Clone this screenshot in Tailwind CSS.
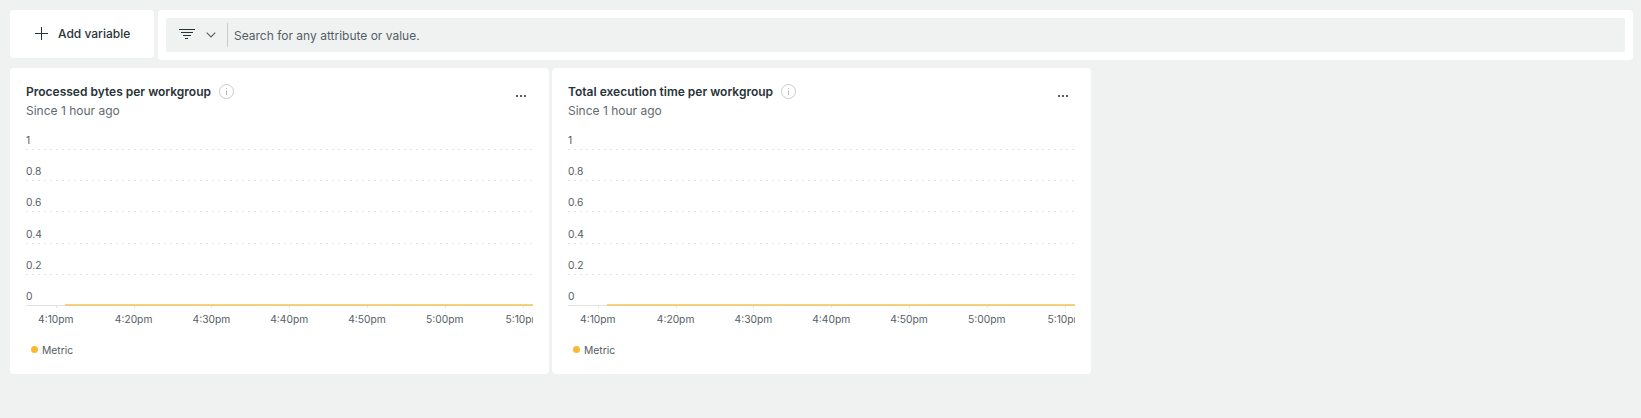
<!DOCTYPE html>
<html lang="en">
<head>
<meta charset="utf-8">
<title>Workgroup dashboard</title>
<script src="https://cdn.jsdelivr.net/npm/@tailwindcss/browser@4"></script>
</head>
<body class="h-[418px] overflow-hidden bg-[#f0f2f2] pt-2.5 pr-2 pl-2.5 font-['Inter',sans-serif] text-[#293338]">
<svg class="hidden">
  <defs>
    <g id="chart">
      <g stroke="#e3e4e4" stroke-dasharray="2 4">
        <path d="M0 21.5H507M0 52.5H507M0 83.5H507M0 115.5H507M0 146.5H507"/>
        <path d="M30.5 178v7M108.5 178v7M185.5 178v7M263.5 178v7M341.5 178v7M419.5 178v7M497.5 178v7"/>
      </g>
      <path d="M0 177.5H507" stroke="#e3e4e4"/>
      <path d="M39 177H507" stroke="#f8d37c" stroke-width="2"/>
      <path d="M39 177.5H507" stroke="#efcb7c"/>
      <g font-size="10.25" fill="#535e65">
        <text x="0" y="16">1</text>
        <text x="0" y="47">0.8</text>
        <text x="0" y="78">0.6</text>
        <text x="0" y="110">0.4</text>
        <text x="0" y="141">0.2</text>
        <text x="0" y="172">0</text>
        <g text-anchor="middle">
          <text x="29.8" y="195">4:10pm</text>
          <text x="107.6" y="195">4:20pm</text>
          <text x="185.4" y="195">4:30pm</text>
          <text x="263.2" y="195">4:40pm</text>
          <text x="341" y="195">4:50pm</text>
          <text x="418.8" y="195">5:00pm</text>
          <text x="497" y="195">5:10pm</text>
        </g>
      </g>
    </g>
    <g id="info" fill="none">
      <circle cx="7.5" cy="7.5" r="7" stroke="#c6cccd"/>
      <path d="M7.5 6.5V11M7.5 4v1" stroke="#b5bcbe"/>
    </g>
  </defs>
</svg>

<header class="flex items-start gap-1">
  <button class="flex h-12 w-36 items-start rounded-[4px] bg-white pt-[17px] pl-[25px]">
    <svg class="h-[13px] w-[13px]" viewBox="0 0 13 13"><path d="M6.5 0v13M0 6.5h13" stroke="#293338" fill="none"/></svg>
    <span class="ml-2.5 text-[12px] leading-[14px] font-medium whitespace-nowrap">Add variable</span>
  </button>
  <div class="h-[50px] flex-1 rounded-[4px] bg-white p-2">
    <div class="flex h-[34px] items-center rounded-[2px] bg-[#f0f2f2] pl-[13px]">
      <svg class="-mt-0.5 h-2.5 w-4" viewBox="0 0 16 10"><path d="M0 .5h16M2 3.5h12M4 6.5h8M6 9.5h3" stroke="#293338" fill="none"/></svg>
      <svg class="ml-[10.5px] h-[6px] w-[10px]" viewBox="0 0 10 6"><path d="M.7.7 5 5 9.3.7" stroke="#535e65" stroke-width="1.1" fill="none"/></svg>
      <div class="ml-[11.5px] h-6 w-px bg-[#c6cccd]"></div>
      <span class="ml-1.5 pt-0.5 text-[12px] leading-4 whitespace-nowrap text-[#535e65]">Search for any attribute or value.</span>
    </div>
  </div>
</header>

<main class="mt-2 flex gap-[3px]">
  <section class="h-[306px] w-[539px] rounded-[4px] bg-white pt-4 pl-4">
    <div class="flex h-11 justify-between pr-[23px]">
      <div>
        <div class="flex h-[15px] items-center gap-2">
          <h2 class="text-[12px] leading-[15px] font-semibold whitespace-nowrap">Processed bytes per workgroup</h2>
          <svg class="h-[15px] w-[15px]" viewBox="0 0 15 15"><use href="#info"/></svg>
        </div>
        <p class="mt-[3px] text-[12px] leading-[18px] text-[#5f6a70]">Since 1 hour ago</p>
      </div>
      <svg class="mt-[11px] h-0.5 w-[10px]" viewBox="0 0 10 2"><path d="M0 0h2v2H0zM4 0h2v2H4zM8 0h2v2H8z" fill="#535e65"/></svg>
    </div>
    <svg class="h-[200px] w-[507px] overflow-hidden" viewBox="0 0 507 200"><use href="#chart"/></svg>
    <div class="mt-3 flex items-center gap-1 pl-[5px]">
      <span class="h-[7px] w-[7px] rounded-full bg-[#fcb92f]"></span>
      <span class="pt-0.5 text-[10.3px] leading-4 text-[#535e65]">Metric</span>
    </div>
  </section>
  <section class="h-[306px] w-[539px] rounded-[4px] bg-white pt-4 pl-4">
    <div class="flex h-11 justify-between pr-[23px]">
      <div>
        <div class="flex h-[15px] items-center gap-2">
          <h2 class="text-[12px] leading-[15px] font-semibold whitespace-nowrap">Total execution time per workgroup</h2>
          <svg class="h-[15px] w-[15px]" viewBox="0 0 15 15"><use href="#info"/></svg>
        </div>
        <p class="mt-[3px] text-[12px] leading-[18px] text-[#5f6a70]">Since 1 hour ago</p>
      </div>
      <svg class="mt-[11px] h-0.5 w-[10px]" viewBox="0 0 10 2"><path d="M0 0h2v2H0zM4 0h2v2H4zM8 0h2v2H8z" fill="#535e65"/></svg>
    </div>
    <svg class="h-[200px] w-[507px] overflow-hidden" viewBox="0 0 507 200"><use href="#chart"/></svg>
    <div class="mt-3 flex items-center gap-1 pl-[5px]">
      <span class="h-[7px] w-[7px] rounded-full bg-[#fcb92f]"></span>
      <span class="pt-0.5 text-[10.3px] leading-4 text-[#535e65]">Metric</span>
    </div>
  </section>
</main>
</body>
</html>
